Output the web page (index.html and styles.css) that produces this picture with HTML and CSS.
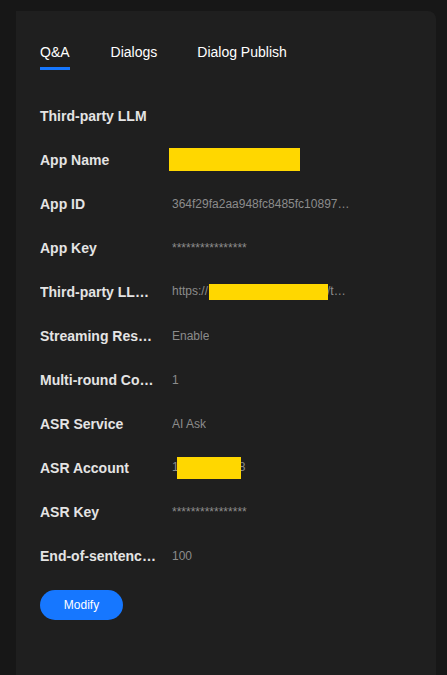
FILE: index.html
```html
<!DOCTYPE html>
<html>
<head>
<meta charset="utf-8">
<link rel="stylesheet" href="styles.css">
</head>
<body>
<div class="card">
  <div class="tabs">
    <div class="tab active">Q&amp;A</div>
    <div class="tab">Dialogs</div>
    <div class="tab">Dialog Publish</div>
  </div>
  <div class="list">
    <div class="row"><div class="title">Third-party LLM</div></div>
    <div class="row"><div class="label">App Name</div><div class="value value-open"><span class="mask mask-name"></span></div></div>
    <div class="row"><div class="label">App ID</div><div class="value">364f29fa2aa948fc8485fc10897a5c21</div></div>
    <div class="row"><div class="label">App Key</div><div class="value">****************</div></div>
    <div class="row"><div class="label">Third-party LLM URL</div><div class="value">https://<span class="mask mask-url"></span>/test/api/v1</div></div>
    <div class="row"><div class="label">Streaming Response</div><div class="value">Enable</div></div>
    <div class="row"><div class="label">Multi-round Conversation</div><div class="value">1</div></div>
    <div class="row"><div class="label">ASR Service</div><div class="value">AI Ask</div></div>
    <div class="row"><div class="label">ASR Account</div><div class="value value-open">1<span class="mask mask-acc"></span>8</div></div>
    <div class="row"><div class="label">ASR Key</div><div class="value">****************</div></div>
    <div class="row"><div class="label">End-of-sentence Detection</div><div class="value">100</div></div>
  </div>
  <button class="btn">Modify</button>
</div>
</body>
</html>
```
FILE: styles.css
```css
html, body {
  margin: 0;
  padding: 0;
  background: #171717;
  font-family: "Liberation Sans", Arial, sans-serif;
}
body {
  height: 675px;
  overflow: hidden;
}
.card {
  margin: 11px 0 0 16px;
  width: 420px;
  height: 700px;
  background: #1f1f1f;
  border-radius: 0 8px 0 0;
  box-sizing: border-box;
  padding: 31px 24px 0 24px;
}
.tabs {
  display: flex;
  gap: 40px;
}
.tab {
  font-size: 14px;
  line-height: 20px;
  color: #ffffff;
  padding-bottom: 5px;
  border-bottom: 3px solid transparent;
}
.tabs .tab:nth-child(1) { margin-right: 1px; }
.tab.active {
  border-bottom-color: #1677ff;
}
.list {
  margin-top: 24px;
}
.row {
  display: flex;
  align-items: center;
  height: 44px;
}
.title, .label {
  font-size: 14px;
  font-weight: bold;
  color: #e4e4e4;
  white-space: nowrap;
}
.label {
  width: 120px;
  margin-right: 12px;
  overflow: hidden;
  text-overflow: ellipsis;
  flex: none;
}
.value {
  font-size: 12px;
  color: #8c8c8c;
  max-width: 178px;
  white-space: nowrap;
  overflow: hidden;
  text-overflow: ellipsis;
}
.value-open {
  overflow: visible;
}
.mask {
  display: inline-block;
  background: #ffd700;
  vertical-align: middle;
  position: relative;
}
.mask-name {
  width: 131px;
  height: 23px;
  margin-left: -3px;
  margin-top: -2px;
}
.mask-url {
  width: 119px;
  height: 21px;
  margin-top: -6px;
  margin-left: 1px;
  margin-right: -1px;
}
.mask-acc {
  width: 64px;
  height: 22px;
  margin-left: -2px;
  margin-right: -2px;
}
.btn {
  margin-top: 12px;
  width: 83px;
  height: 30px;
  border: none;
  border-radius: 15px;
  background: #1677ff;
  color: #ffffff;
  font-family: "Liberation Sans", Arial, sans-serif;
  font-size: 12px;
  padding: 0;
}
```
